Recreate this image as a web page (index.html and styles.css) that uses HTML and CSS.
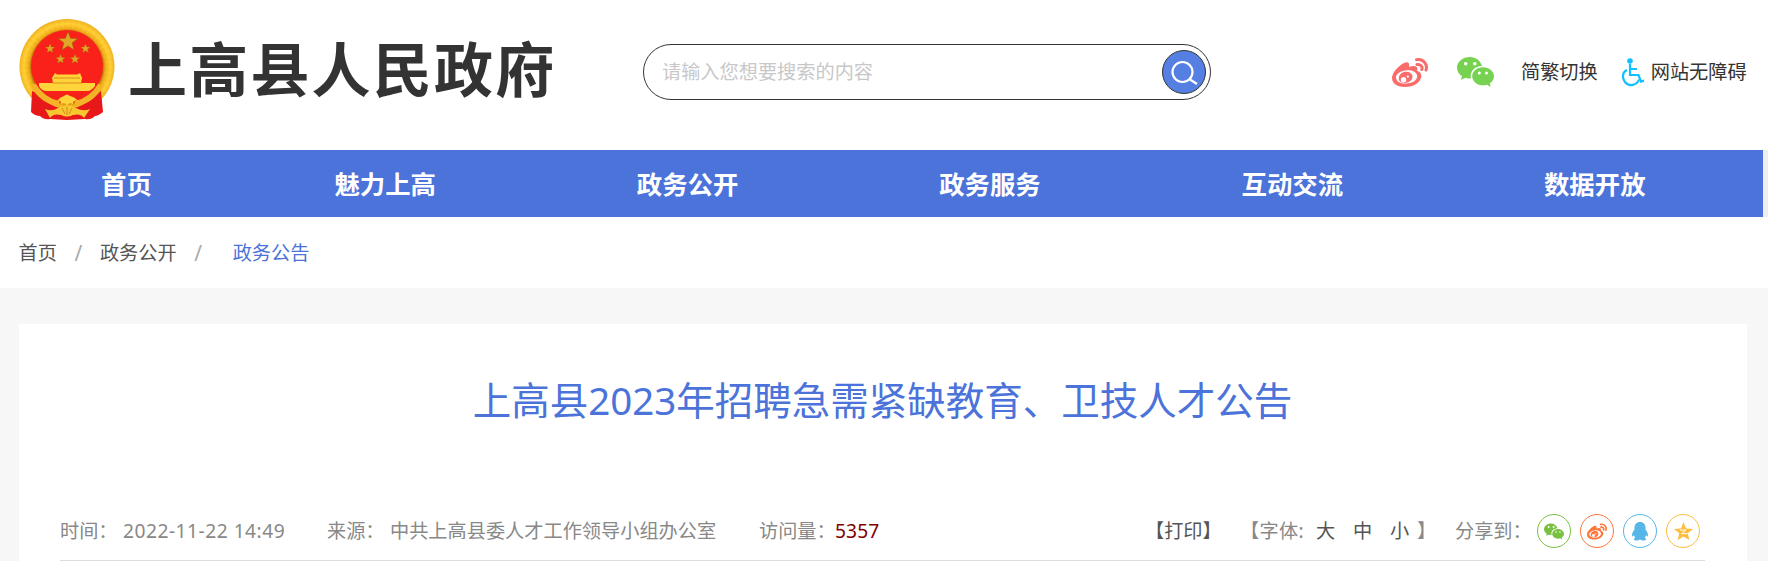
FILE: index.html
```html
<!DOCTYPE html>
<html lang="zh-CN">
<head>
<meta charset="utf-8">
<title>上高县人民政府</title>
<link rel="stylesheet" href="styles.css">
</head>
<body>
<svg class="defs" width="0" height="0">
  <symbol id="weibo" viewBox="0 0 36 29">
    <path fill="currentColor" fill-rule="evenodd" d="M12 5C16 3 18 5 17 9C22 7 27 8 25 13C29 14 30 17 29 20C27 26 20 29 13 29C6 29 0 26 0 20C0 15 6 8 12 5ZM13 12.500C7.500 13.500 4 16 4 20C5 24.500 10 26.300 16 25.300C22.500 24.500 26 21 25 17C24 13.500 19 11.500 13 12.500Z"/>
    <path fill="currentColor" fill-rule="evenodd" d="M13 13.800C8 14.800 5.500 19 7.500 23C10 26 16 25.500 19.500 22C22.500 17 18.500 12.800 13 13.800ZM11.500 19A2.700 2.700 0 1 0 11.600 24.400A2.700 2.700 0 1 0 11.500 19ZM15.800 17.500A1.100 1.100 0 1 0 15.900 19.700A1.100 1.100 0 1 0 15.800 17.500Z"/>
    <path fill="none" stroke="currentColor" stroke-width="3" stroke-linecap="round" d="M24.500 1.700C31 .5 36 6 34 12M25 6.500C28.500 6 31 8.500 29.800 11.500"/>
  </symbol>
  <symbol id="wechat" viewBox="0 0 37 30">
    <path fill="currentColor" fill-rule="evenodd" d="M13 0C5.800 0 0 4.800 0 10.800C0 14.200 1.900 17.100 5 19.100L4 23L8.500 20.800Q11 21.600 14 21.300C12.500 15 17 9.300 25 9C23.500 3.800 18.800 0 13 0ZM8.700 5A1.800 1.800 0 1 0 8.700 8.600A1.800 1.800 0 1 0 8.700 5ZM17.800 5A1.800 1.800 0 1 0 17.800 8.600A1.800 1.800 0 1 0 17.800 5Z"/>
    <path fill="currentColor" fill-rule="evenodd" d="M26 10.200C20 10.200 15.200 14.200 15.200 19.200C15.200 24.300 20 28.300 26 28.300Q28.200 28.300 30 27.700L33.700 30L32.800 26.300C35.400 24.600 37 22.100 37 19.200C37 14.200 32 10.200 26 10.200ZM22.300 14.500A1.500 1.500 0 1 0 22.300 17.500A1.500 1.500 0 1 0 22.300 14.500ZM29.500 14.500A1.500 1.500 0 1 0 29.500 17.500A1.500 1.500 0 1 0 29.500 14.500Z"/>
  </symbol>
  <symbol id="star" viewBox="-10 -10 20 20">
    <path d="M0-10L2.600-3.200L9.800-3L4.100 1.500L6.100 8.500L0 4.500L-6.100 8.500L-4.100 1.500L-9.800-3L-2.600-3.200Z"/>
  </symbol>
</svg>

<header class="header">
  <div class="brand">
    <svg class="emblem" viewBox="0 0 96 101">
      <defs>
        <radialGradient id="gold" gradientUnits="userSpaceOnUse" cx="48" cy="48" r="49">
          <stop offset=".73" stop-color="#b8730c"/><stop offset=".78" stop-color="#f0a818"/>
          <stop offset=".88" stop-color="#ffcf32"/><stop offset="1" stop-color="#eda91c"/>
        </radialGradient>
      </defs>
      <circle cx="48" cy="47.500" r="47.500" fill="url(#gold)"/>
      <circle cx="48" cy="47.500" r="42" fill="none" stroke="#ffe060" stroke-width="8" stroke-dasharray="1.500 4" opacity=".2"/>
      <circle cx="48" cy="47" r="36" fill="#fb211b"/>
      <g fill="#e0a626" stroke="#a8560b" stroke-width=".6">
        <use href="#star" x="39" y="12.500" width="20" height="20"/>
        <use href="#star" x="26" y="24.500" width="10" height="10"/>
        <use href="#star" x="61.500" y="24.500" width="10" height="10"/>
        <use href="#star" x="36.500" y="35" width="10" height="10"/>
        <use href="#star" x="51" y="35" width="10" height="10"/>
      </g>
      <path fill="#ffd43a" d="M36 54L38 55.500H58L61 54L63 59L62 64H76V67Q73 71 70 72H26Q22 71 20 67V64H34L33 59Z"/>
      <path d="M35 59H61M33 64H63" stroke="#d98e19"/>
      <path fill="#f4201a" d="M28 75H68L62 81L54 84H42L34 81Z"/>
      <path fill="#e8181a" d="M13 72Q20 74 25 80Q32 87 41 89H55Q64 87 71 80Q76 74 82 72L84 93Q79 97 76 97Q72 101 66 100L48 101L31 100Q25 101 21 97Q16 97 12 93Z"/>
      <path fill="none" stroke="#f4b326" stroke-width="6" d="M14 66Q24 82 40 85M82 66Q72 82 56 85"/>
      <path fill="#ffd43a" d="M38 82Q41 78 45 77Q48 74 51 77Q56 78 59 82Q54 80 54 85Q49 83 48 87Q47 83 42 85Q42 80 38 82Z"/>
      <path fill="#f6c731" d="M26 90Q33 93 39 89Q48 84 57 89Q64 93 71 90L65 99Q62 94 54 96Q48 99 42 96Q34 94 31 99Z"/>
      <path stroke="#df8818" d="M43 89L46 95M48 88V96M53 89L50 95"/>
    </svg>
    <h1 class="brand-name">上高县人民政府</h1>
  </div>
  <div class="search">
    <span class="placeholder">请输入您想要搜索的内容</span>
    <span class="search-button">
      <svg width="28" height="28" viewBox="0 0 28 28" fill="none" stroke="#fff" stroke-width="2.200"><circle cx="12.500" cy="14" r="10"/><path d="M20 21.500L27 26"/></svg>
    </span>
  </div>
  <div class="tools">
    <svg class="tool-weibo" width="36" height="29"><use href="#weibo"/></svg>
    <svg class="tool-wechat" width="37" height="30"><use href="#wechat"/></svg>
    <span class="tool-lang">简繁切换</span>
    <svg class="tool-access" width="22" height="29" viewBox="0 0 22 29" fill="none" stroke="#10bfff" stroke-width="2.200">
      <circle cx="8" cy="3" r="2.800" fill="#10bfff" stroke="none"/>
      <path d="M8 6V17H16.500L19 23.500L22 22.500M8 11H15"/><path d="M5 12C0 14 0 20 3 24C7 29 15 27.500 17 21.500"/>
    </svg>
    <span>网站无障碍</span>
  </div>
</header>

<nav class="nav">
  <a class="nav-home">首页</a><a>魅力上高</a><a>政务公开</a><a>政务服务</a><a>互动交流</a><a>数据开放</a>
</nav>

<div class="crumbs">
  <span>首页</span><span class="slash">/</span><span>政务公开</span><span class="slash">/</span><span class="current">政务公告</span>
</div>

<main class="page">
  <article class="card">
    <h2 class="title">上高县2023年招聘急需紧缺教育、卫技人才公告</h2>
    <div class="meta">
      <span class="meta-label">时间：</span><span class="date">2022-11-22 14:49</span>
      <span class="meta-label">来源：</span><span class="source">中共上高县委人才工作领导小组办公室</span>
      <span class="visits">访问量：</span><span class="count">5357</span>
      <div class="actions">
        <span class="print">【打印】</span>
        <span class="font-label">【字体:</span>
        <span class="size">大</span><span class="size">中</span><span class="size-last">小</span><span class="bracket">】</span>
        <span class="share-label">分享到：</span>
        <div class="share">
          <span class="share-item green"><svg width="20" height="17"><use href="#wechat"/></svg></span>
          <span class="share-item orange"><svg width="20" height="17"><use href="#weibo"/></svg></span>
          <span class="share-item blue"><svg width="18" height="19" viewBox="0 0 18 19"><path fill="currentColor" d="M9 0C5.500 0 3.500 2.500 3.500 6L3.300 8C1.500 10 .5 12.500 1.200 14.500C2 14.500 2.500 13.500 2.800 13C3 14.200 3.500 15 4.300 15.800C2 16.800 3 18.500 5 18.500Q8 18.500 9 17.500Q10 18.500 13 18.500C15 18.500 16 16.800 13.700 15.800C14.500 15 15 14.200 15.200 13C15.500 13.500 16 14.500 16.800 14.500C17.500 12.500 16.500 10 14.700 8L14.500 6C14.500 2.500 12.500 0 9 0Z"/></svg></span>
          <span class="share-item yellow"><svg width="19" height="19" viewBox="0 0 19 19"><path fill="currentColor" d="M9.500 0L12 6.400L19 7L13.700 11.300L15.400 18L9.500 14.500L3.600 18L5.300 11.300L0 7L7 6.400Z"/><path fill="none" stroke="#fff" stroke-width="1" d="M6 8H12L7.500 11.700H13.500"/></svg></span>
        </div>
      </div>
    </div>
  </article>
</main>
</body>
</html>
```

FILE: styles.css
```css
* { box-sizing: border-box; }
body {
  margin: 0;
  height: 561px;
  overflow: hidden;
  background: #fff;
  color: #333;
  font: 19.2px/28px "Noto Sans", "Noto Sans CJK SC", sans-serif;
}
.defs { display: block; }
svg { flex: none; }
span, a { white-space: nowrap; }

.header { height: 150px; display: flex; align-items: flex-start; padding: 0 0 0 19px; }
.brand { display: flex; width: 624px; padding-top: 19px; }
.emblem { width: 96px; height: 101px; }
.brand-name {
  margin: 3px 0 0 13px;
  white-space: nowrap;
  font: bold 59px/90px "Noto Sans CJK SC", sans-serif;
  letter-spacing: 2.200px;
}
.search {
  width: 568px;
  height: 56px;
  margin-top: 44px;
  padding: 0 4px 0 18px;
  display: flex;
  align-items: center;
  justify-content: space-between;
  border: 1px solid #333;
  border-radius: 28px;
}
.placeholder { color: #c8c8c8; }
.search-button {
  width: 44px;
  height: 44px;
  display: flex;
  align-items: center;
  justify-content: center;
  border: 1px solid #333;
  border-radius: 50%;
  background: #557fe2;
}
.tools { display: flex; align-items: center; height: 30px; margin: 57px 0 0 181px; }
.tool-weibo { color: #fa6b6b; margin-right: 29px; }
.tool-wechat { color: #76d250; margin-right: 27px; }
.tool-lang { margin-right: 24px; }
.tool-access { margin-right: 7px; }

.nav {
  height: 67px;
  padding-left: 19px;
  display: flex;
  background: #4b73d9;
  border-right: 5px solid #eee;
}
.nav a {
  width: 302.400px;
  flex: none;
  text-align: center;
  color: #fff;
  font-size: 25.400px;
  font-weight: bold;
  line-height: 68px;
}
.nav .nav-home { width: 215px; }

.crumbs { height: 71px; display: flex; padding: 22px 0 0 18.500px; color: #555; }
.slash { width: 43px; text-align: center; font-size: 21px; color: #aaa; }
.current { margin-left: 13px; color: #4b73d9; }

.page { height: 273px; padding: 36px 21px 0 19px; background: #f7f7f7; }
.card { height: 237px; padding: 0 42px 0 41px; background: #fff; overflow: hidden; }
.title {
  margin: 0;
  padding-top: 48px;
  text-align: center;
  color: #4b73d9;
  font-size: 38.500px;
  line-height: 56px;
  font-weight: 400;
}
.meta {
  height: 133px;
  padding-top: 86px;
  display: flex;
  align-items: flex-start;
  color: #888;
  border-bottom: 1px solid #ddd;
  line-height: 34px;
}
.meta-label { width: 63px; }
.date { width: 204px; letter-spacing: .5px; }
.source { width: 369px; }
.visits { width: 76px; }
.count { color: #800000; letter-spacing: .1px; }
.actions { display: flex; margin-left: auto; padding-right: 5px; }
.print { width: 95px; color: #555; }
.font-label { width: 76px; letter-spacing: .3px; }
.size { width: 37px; color: #555; }
.size-last { width: 27px; color: #555; }
.bracket { width: 38px; }
.share-label { width: 82px; }
.share { display: flex; gap: 9px; }
.share-item {
  width: 34px;
  height: 34px;
  display: flex;
  align-items: center;
  justify-content: center;
  border: 1px solid currentColor;
  border-radius: 50%;
}
.green { color: #7ac143; }
.orange { color: #ff763b; }
.blue { color: #56b6e7; }
.yellow { color: #fdbe3d; }
```
